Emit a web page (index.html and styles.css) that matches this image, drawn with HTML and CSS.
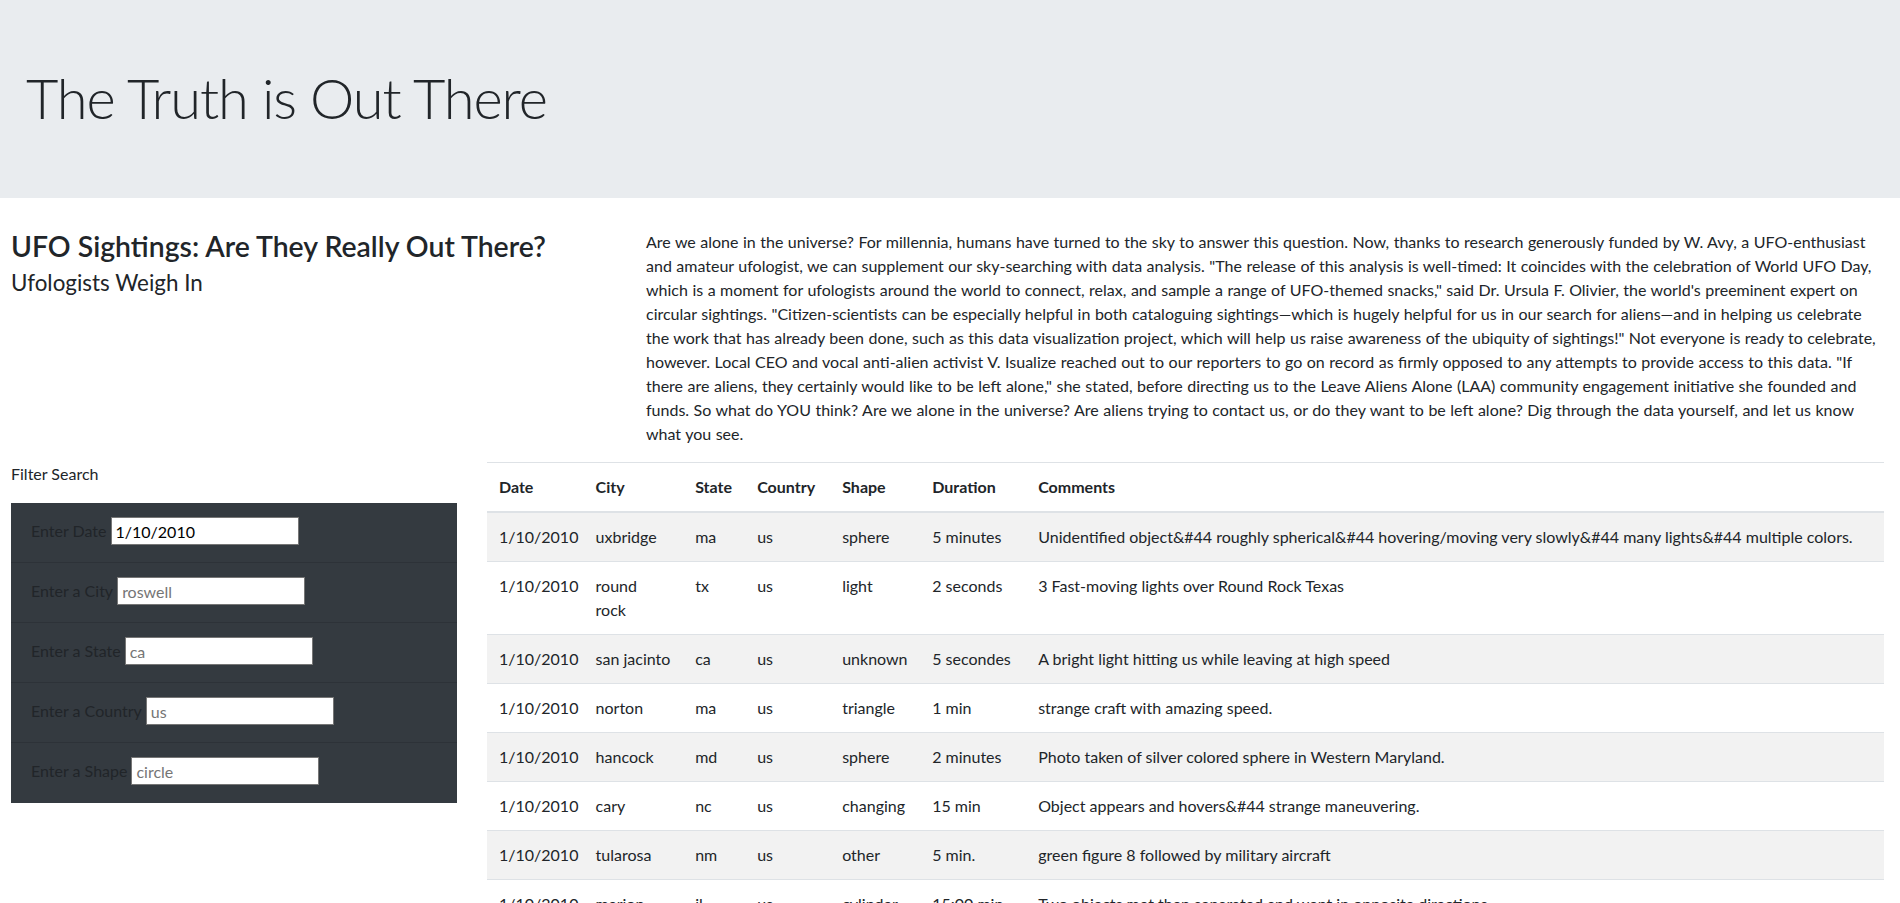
FILE: index.html
```html
<!DOCTYPE html>
<html lang="en">
<head>
<meta charset="utf-8">
<title>UFO Sightings</title>
<link rel="stylesheet" href="styles.css">
</head>
<body>
<header class="jumbotron">
  <h1 class="display">The Truth is Out There</h1>
</header>

<div class="page">
  <section class="intro">
    <div class="intro-head">
      <h3 class="title">UFO Sightings: Are They Really Out There?<br><small class="subtitle">Ufologists Weigh In</small></h3>
    </div>
    <div class="intro-text">
      <p>Are we alone in the universe? For millennia, humans have turned to the sky to answer this question. Now, thanks to research generously funded by W. Avy, a UFO-enthusiast and amateur ufologist, we can supplement our sky-searching with data analysis. "The release of this analysis is well-timed: It coincides with the celebration of World UFO Day, which is a moment for ufologists around the world to connect, relax, and sample a range of UFO-themed snacks," said Dr. Ursula F. Olivier, the world's preeminent expert on circular sightings. "Citizen-scientists can be especially helpful in both cataloguing sightings—which is hugely helpful for us in our search for aliens—and in helping us celebrate the work that has already been done, such as this data visualization project, which will help us raise awareness of the ubiquity of sightings!" Not everyone is ready to celebrate, however. Local CEO and vocal anti-alien activist V. Isualize reached out to our reporters to go on record as firmly opposed to any attempts to provide access to this data. "If there are aliens, they certainly would like to be left alone," she stated, before directing us to the Leave Aliens Alone (LAA) community engagement initiative she founded and funds. So what do YOU think? Are we alone in the universe? Are aliens trying to contact us, or do they want to be left alone? Dig through the data yourself, and let us know what you see.</p>
    </div>
  </section>

  <section class="data">
    <aside class="filter">
      <div class="filter-title">Filter Search</div>
      <form class="filters">
        <div class="filter-item"><label for="datetime">Enter Date</label> <input id="datetime" type="text" value="1/10/2010" placeholder="1/10/2010"></div>
        <div class="filter-item"><label for="city">Enter a City</label> <input id="city" type="text" placeholder="roswell"></div>
        <div class="filter-item"><label for="state">Enter a State</label> <input id="state" type="text" placeholder="ca"></div>
        <div class="filter-item"><label for="country">Enter a Country</label> <input id="country" type="text" placeholder="us"></div>
        <div class="filter-item"><label for="shape">Enter a Shape</label> <input id="shape" type="text" placeholder="circle"></div>
      </form>
    </aside>

    <div class="table-wrap">
      <table class="ufo-table">
        <thead>
          <tr>
            <th class="c-date">Date</th>
            <th class="c-city">City</th>
            <th class="c-state">State</th>
            <th class="c-country">Country</th>
            <th class="c-shape">Shape</th>
            <th class="c-duration">Duration</th>
            <th class="c-comments">Comments</th>
          </tr>
        </thead>
        <tbody>
          <tr><td>1/10/2010</td><td>uxbridge</td><td>ma</td><td>us</td><td>sphere</td><td>5 minutes</td><td>Unidentified object&amp;#44 roughly spherical&amp;#44 hovering/moving very slowly&amp;#44 many lights&amp;#44 multiple colors.</td></tr>
          <tr><td>1/10/2010</td><td>round rock</td><td>tx</td><td>us</td><td>light</td><td>2 seconds</td><td>3 Fast-moving lights over Round Rock Texas</td></tr>
          <tr><td>1/10/2010</td><td>san jacinto</td><td>ca</td><td>us</td><td>unknown</td><td>5 secondes</td><td>A bright light hitting us while leaving at high speed</td></tr>
          <tr><td>1/10/2010</td><td>norton</td><td>ma</td><td>us</td><td>triangle</td><td>1 min</td><td>strange craft with amazing speed.</td></tr>
          <tr><td>1/10/2010</td><td>hancock</td><td>md</td><td>us</td><td>sphere</td><td>2 minutes</td><td>Photo taken of silver colored sphere in Western Maryland.</td></tr>
          <tr><td>1/10/2010</td><td>cary</td><td>nc</td><td>us</td><td>changing</td><td>15 min</td><td>Object appears and hovers&amp;#44 strange maneuvering.</td></tr>
          <tr><td>1/10/2010</td><td>tularosa</td><td>nm</td><td>us</td><td>other</td><td>5 min.</td><td>green figure 8 followed by military aircraft</td></tr>
          <tr><td>1/10/2010</td><td>marion</td><td>il</td><td>us</td><td>cylinder</td><td>15:00 min</td><td>Two objects met then separated and went in opposite directions.</td></tr>
          <tr><td>1/10/2010</td><td>rochester</td><td>ny</td><td>us</td><td>light</td><td>10 minutes</td><td>Bright orange light moving slowly across the sky.</td></tr>
        </tbody>
      </table>
    </div>
  </section>
</div>
</body>
</html>
```
FILE: styles.css
```css
* { box-sizing: border-box; }

html, body { margin: 0; padding: 0; }

body {
  font-family: Lato, "Liberation Sans", sans-serif;
  font-size: 16px;
  line-height: 1.5;
  color: #212529;
  background: #fff;
}

/* header */
.jumbotron {
  background: #e9ecef;
  height: 198px;
  margin: 0 0 32px;
  padding: 64px 26px 0;
}

.display {
  margin: 0;
  font-size: 56px;
  font-weight: 300;
  line-height: 1.2;
  letter-spacing: -1.1px;
}

.page {
  padding: 0 0 0 11px;
}

/* intro */
.intro {
  display: flex;
}

.intro-head {
  width: 635px;
  flex: none;
}

.title {
  margin: 0;
  font-size: 28.4px;
  font-weight: 600;
  line-height: 33.6px;
}

.subtitle {
  font-size: 22.4px;
  font-weight: 400;
}

.intro-text {
  width: 1240px;
  flex: none;
}

.intro-text p {
  margin: 0 0 16px;
  word-spacing: 0.4px;
}

/* data row */
.data {
  display: flex;
  gap: 30px;
}

.filter {
  width: 446px;
  flex: none;
}

.filter-title {
  line-height: 24px;
  margin-bottom: 17px;
}

.filters {
  margin: 0;
  background: #343a40;
}

.filter-item {
  display: flex;
  align-items: center;
  gap: 4px;
  height: 60px;
  padding: 14px 20px 17px;
  border-bottom: 1px solid rgba(0, 0, 0, 0.125);
  color: #212529;
}

.filter-item:last-child {
  border-bottom-color: transparent;
}

.filter-item label {
  white-space: nowrap;
}

.filter-item input {
  width: 188px;
  height: 28px;
  border: 1px solid #767676;
  background: #fff;
  padding: 1px 4px;
  font-family: inherit;
  font-size: 16px;
  color: #000;
  outline: none;
}

.filter-item input::placeholder {
  color: #757575;
}

/* table */
.table-wrap {
  width: 1397px;
  flex: none;
}

.ufo-table {
  width: 100%;
  border-collapse: collapse;
  table-layout: fixed;
}

.ufo-table th,
.ufo-table td {
  padding: 12px;
  vertical-align: top;
  border-top: 1px solid #dee2e6;
  text-align: left;
}

.ufo-table thead th {
  font-weight: 700;
  vertical-align: bottom;
  border-bottom: 2px solid #dee2e6;
}

.ufo-table tbody tr:nth-of-type(odd) {
  background: rgba(0, 0, 0, 0.05);
}

.c-date { width: 96.6px; }
.c-city { width: 99.6px; }
.c-state { width: 62px; }
.c-country { width: 85px; }
.c-shape { width: 90px; }
.c-duration { width: 106px; }
.c-comments { width: auto; }
```
